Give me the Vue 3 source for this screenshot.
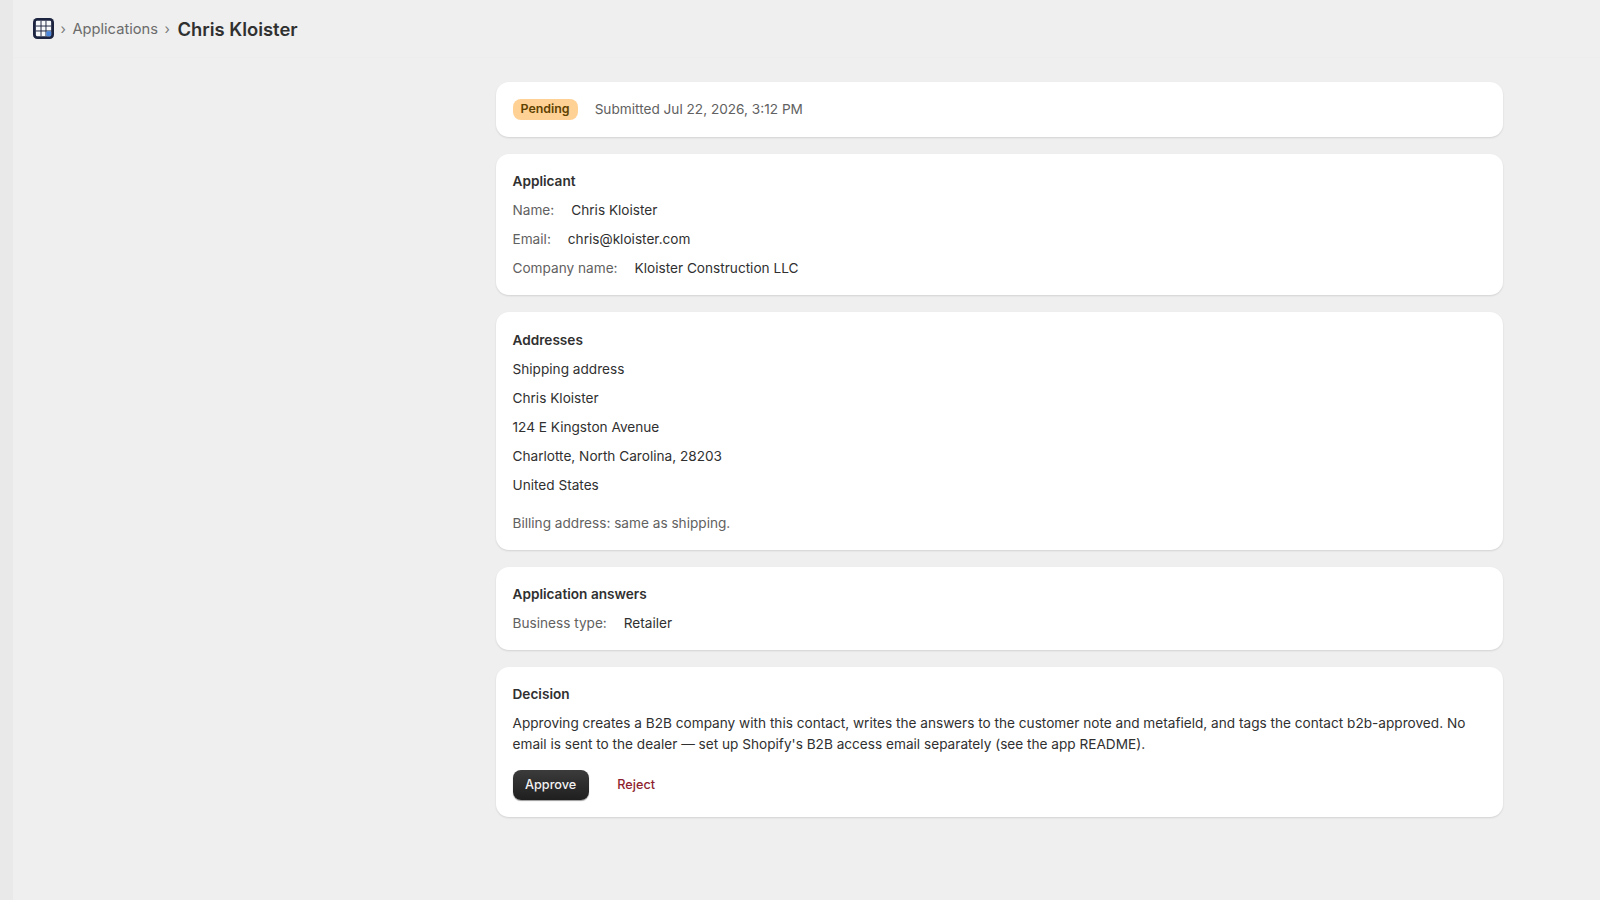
<template>
  <div class="page">
    <div class="rail"></div>
    <div class="main">
      <header class="topbar">
        <svg class="app-icon" width="21" height="21" viewBox="0 0 22 22">
          <rect width="22" height="22" rx="4.5" fill="#1c2440" />
          <rect x="3" y="3" width="16" height="16" rx="1.2" fill="#f7f8fa" />
          <path d="M8.4 3v16M13.6 3v16M3 8.4h16M3 13.6h16" stroke="#1c2440" stroke-width="1" />
          <rect x="14" y="14" width="5" height="5" rx="0.8" fill="#4a86dc" />
        </svg>
        <span class="sep">›</span>
        <span class="crumb">Applications</span>
        <span class="sep">›</span>
        <h1 class="title">Chris Kloister</h1>
      </header>

      <main class="content">
        <section class="card status-card">
          <span class="badge">Pending</span>
          <span class="muted">Submitted Jul 22, 2026, 3:12 PM</span>
        </section>

        <section class="card">
          <h2>Applicant</h2>
          <div v-for="row in applicant" :key="row.label" class="row">
            <span class="muted">{{ row.label }}:</span>
            <span>{{ row.value }}</span>
          </div>
        </section>

        <section class="card">
          <h2>Addresses</h2>
          <div v-for="line in address" :key="line" class="row">{{ line }}</div>
          <div class="row muted billing">Billing address: same as shipping.</div>
        </section>

        <section class="card">
          <h2>Application answers</h2>
          <div class="row">
            <span class="muted">Business type:</span>
            <span>Retailer</span>
          </div>
        </section>

        <section class="card decision">
          <h2>Decision</h2>
          <p class="note">
            Approving creates a B2B company with this contact, writes the answers to the customer note and metafield, and tags the contact b2b-approved. No email is sent to the dealer — set up Shopify's B2B access email separately (see the app README).
          </p>
          <div class="actions">
            <button class="btn-primary">Approve</button>
            <button class="btn-plain">Reject</button>
          </div>
        </section>
      </main>
    </div>
  </div>
</template>

<script setup>
const applicant = [
  { label: 'Name', value: 'Chris Kloister' },
  { label: 'Email', value: 'chris@kloister.com' },
  { label: 'Company name', value: 'Kloister Construction LLC' }
]

const address = [
  'Shipping address',
  'Chris Kloister',
  '124 E Kingston Avenue',
  'Charlotte, North Carolina, 28203',
  'United States'
]
</script>

<style>
body {
  background: #efefef;
}
</style>

<style scoped>
.page {
  display: flex;
  height: 900px;
  overflow: hidden;
  font-family: Inter, "Liberation Sans", sans-serif;
  font-size: 13.63px;
  line-height: 20px;
  color: #303030;
  background: #efefef;
}

.rail {
  width: 13px;
  flex-shrink: 0;
  background: #e9e9e9;
}

.main {
  flex: 1;
  min-width: 0;
}

.topbar {
  height: 57px;
  display: flex;
  align-items: center;
  padding-left: 20px;
  gap: 6.5px;
  border-bottom: 1px solid #ededed;
}

.sep {
  color: #7a7a7a;
  font-size: 14px;
}

.crumb {
  font-size: 14.7px;
  color: #6b6b6b;
}

.title {
  margin: 0 0 0 1px;
  font-size: 18.4px;
  font-weight: 600;
  color: #303030;
}

.content {
  width: 1007px;
  margin-left: 483px;
  padding-top: 24px;
  display: flex;
  flex-direction: column;
  gap: 17px;
}

.card {
  padding: 17.5px 16.5px 17px;
  background: #ffffff;
  border-radius: 13px;
  box-shadow: 0 1px 2px rgba(0, 0, 0, 0.12);
  display: flex;
  flex-direction: column;
  gap: 9px;
}

.status-card {
  flex-direction: row;
  align-items: center;
  gap: 17px;
  height: 54.5px;
  box-sizing: border-box;
  padding-top: 16px;
  padding-bottom: 16px;
}

.decision {
  padding-top: 17px;
  padding-bottom: 16.5px;
}

.badge {
  padding: 0.5px 8px;
  border-radius: 8px;
  background: #ffd195;
  color: #5e4200;
  font-size: 12.4px;
  font-weight: 600;
}

.muted {
  color: #616161;
}

h2 {
  margin: 0;
  font-size: 13.63px;
  line-height: 20px;
  font-weight: 600;
  color: #303030;
}

.row {
  display: flex;
  gap: 17px;
}

.billing {
  margin-top: 9px;
}

.note {
  margin: 0;
  line-height: 21.4px;
}

.actions {
  display: flex;
  align-items: center;
  gap: 16px;
  margin-top: 5.5px;
}

button {
  font: inherit;
  font-size: 12.7px;
  font-weight: 500;
  border: 0;
  cursor: pointer;
}

.btn-primary {
  height: 30px;
  padding: 0 12.5px;
  border-radius: 8px;
  color: #f2f2f2;
  background: linear-gradient(#3b3b3b, #1f1f1f);
  box-shadow: 0 1px 1px rgba(0, 0, 0, 0.4);
}

.btn-plain {
  padding: 0 12.5px;
  background: none;
  color: #8e1f2f;
}
</style>
